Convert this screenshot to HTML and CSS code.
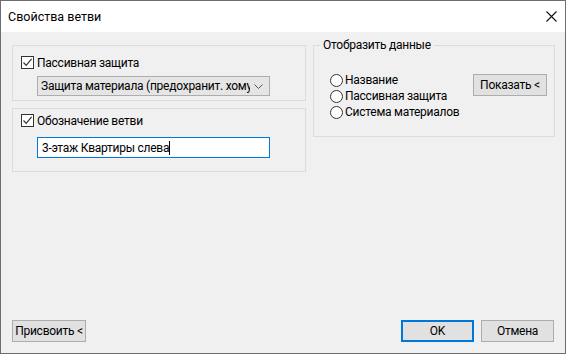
FILE: index.html
```html
<!DOCTYPE html>
<html lang="ru">
<head>
    <meta charset="UTF-8">
    <title>Свойства ветви</title>
    <link rel="stylesheet" href="styles.css">
</head>
<body>
    <div class="window">
        <!-- Title bar -->
        <div class="titlebar">
            <span class="title">Свойства ветви</span>
            <span class="close">
                <svg width="11" height="11" viewBox="0 0 11 11"><path d="M0.5 0.5 L10.5 10.5 M10.5 0.5 L0.5 10.5" stroke="#111" stroke-width="1.1" fill="none"/></svg>
            </span>
        </div>

        <div class="dialog-body">
            <div class="columns">
                <div class="left-col">
                    <div class="group group-protection">
                        <label class="check-row">
                            <span class="checkbox">
                                <svg width="11" height="11" viewBox="0 0 11 11"><path d="M1.5 5.5 L4.2 8.3 L9.6 1.8" stroke="#333" stroke-width="1.2" fill="none"/></svg>
                            </span>
                            Пассивная защита
                        </label>
                        <div class="combo">
                            <span class="combo-text">Защита материала (предохранит. хомуты)</span>
                            <svg class="chevron" width="9" height="5" viewBox="0 0 9 5"><path d="M0.5 0.5 L4.5 4.5 L8.5 0.5" stroke="#555" fill="none"/></svg>
                        </div>
                    </div>

                    <div class="group group-name">
                        <label class="check-row">
                            <span class="checkbox">
                                <svg width="11" height="11" viewBox="0 0 11 11"><path d="M1.5 5.5 L4.2 8.3 L9.6 1.8" stroke="#333" stroke-width="1.2" fill="none"/></svg>
                            </span>
                            Обозначение ветви
                        </label>
                        <div class="textbox">3-этаж Квартиры слева<span class="caret"></span></div>
                    </div>
                </div>

                <div class="group group-display">
                    <span class="legend">Отобразить данные</span>
                    <div class="display-row">
                        <div class="radios">
                            <label class="radio-row"><span class="radio"></span>Название</label>
                            <label class="radio-row"><span class="radio"></span>Пассивная защита</label>
                            <label class="radio-row"><span class="radio"></span>Система материалов</label>
                        </div>
                        <button class="btn btn-show">Показать &lt;</button>
                    </div>
                </div>
            </div>

            <!-- Footer -->
            <div class="footer">
                <button class="btn btn-assign">Присвоить &lt;</button>
                <div class="footer-right">
                    <button class="btn btn-default">OK</button>
                    <button class="btn">Отмена</button>
                </div>
            </div>
        </div>
    </div>
</body>
</html>
```

FILE: styles.css
```css
* {
    box-sizing: border-box;
    margin: 0;
    padding: 0;
}

body {
    font-family: Roboto, "Noto Sans", sans-serif;
    font-size: 12px;
    color: #000;
    background: #f0f0f0;
}

.window {
    width: 566px;
    height: 354px;
    border: 1px solid #6e6e6e;
    display: flex;
    flex-direction: column;
    background: #f0f0f0;
}

/* Title bar */
.titlebar {
    height: 31px;
    background: #ffffff;
    display: flex;
    align-items: center;
    justify-content: space-between;
    padding: 0 8px 0 7px;
}

.title {
    font-size: 12.5px;
    padding-bottom: 1px;
}

.close {
    display: flex;
    width: 11px;
    height: 11px;
}

/* Body */
.dialog-body {
    flex: 1;
    display: flex;
    flex-direction: column;
    padding: 13px 10px 11px 11px;
    letter-spacing: -0.25px;
}

.columns {
    display: flex;
    gap: 7px;
    align-items: flex-start;
}

.left-col {
    width: 294px;
    display: flex;
    flex-direction: column;
    gap: 7px;
}

.group {
    border: 1px solid #dcdcdc;
    position: relative;
}

.group-protection {
    height: 56px;
    padding: 10px 0 0 8px;
}

.group-name {
    height: 64px;
    padding: 5px 0 0 8px;
}

.group-display {
    width: 242px;
    height: 92px;
}

.legend {
    position: absolute;
    top: -9px;
    left: 6px;
    padding: 0 3px;
    background: #f0f0f0;
    line-height: 16px;
}

.check-row {
    display: flex;
    align-items: center;
    gap: 3px;
    height: 13px;
}

.checkbox {
    width: 13px;
    height: 13px;
    border: 1px solid #333;
    background: #fff;
    display: flex;
    align-items: center;
    justify-content: center;
}

.combo {
    margin: 7px 0 0 16px;
    width: 233px;
    height: 20px;
    background: #e5e5e5;
    border: 1px solid #adadad;
    display: flex;
    align-items: center;
    padding: 0 6px 0 3px;
    gap: 4px;
}

.combo-text {
    flex: 1;
    overflow: hidden;
    white-space: nowrap;
}

.chevron {
    flex-shrink: 0;
}

.textbox {
    margin: 10px 0 0 16px;
    width: 233px;
    height: 21px;
    background: #fff;
    border: 1px solid #0078d7;
    display: flex;
    align-items: center;
    padding: 0 4px;
    white-space: nowrap;
}

.caret {
    width: 1px;
    height: 14px;
    background: #000;
}

.display-row {
    display: flex;
    justify-content: space-between;
    align-items: flex-start;
    padding: 26px 7px 0 16px;
}

.radios {
    display: flex;
    flex-direction: column;
}

.radio-row {
    display: flex;
    align-items: center;
    gap: 2px;
    height: 16px;
}

.radio {
    width: 13px;
    height: 13px;
    border: 1px solid #333;
    border-radius: 50%;
    background: #fff;
}

/* Buttons */
.btn {
    font-family: inherit;
    font-size: 12px;
    letter-spacing: inherit;
    height: 22px;
    background: #e1e1e1;
    border: 1px solid #adadad;
    color: #000;
    padding: 0;
    white-space: nowrap;
}

.btn-show {
    width: 74px;
    margin-top: 2px;
}

.btn-assign {
    width: 74px;
}

.footer {
    margin-top: auto;
    display: flex;
    justify-content: space-between;
    align-items: center;
    padding-right: 1px;
}

.footer-right {
    display: flex;
    gap: 7px;
}

.footer-right .btn {
    width: 73px;
}

.btn-default {
    border: 2px solid #0078d7;
}
```
